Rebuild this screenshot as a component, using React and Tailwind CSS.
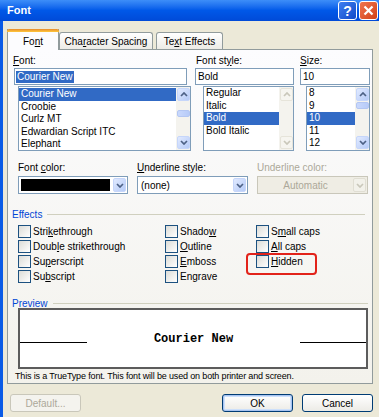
import React from 'react';

const sans = "font-['Liberation_Sans',Arial,sans-serif]";

function Chevron({ dir = 'down', color = '#4d6185' }) {
  return (
    <svg width="8" height="5" viewBox="0 0 8 5">
      <path d={dir === 'down' ? 'M1 1 L4 4 L7 1' : 'M1 4 L4 1 L7 4'} fill="none" stroke={color} strokeWidth="1.7" />
    </svg>
  );
}

function ScrollBtn({ dir, disabled }) {
  return (
    <div
      className={`w-[13px] h-[13px] rounded-[2px] border flex items-center justify-center ${
        disabled ? 'border-[#e6e4da] bg-[#f6f5f0]' : 'border-[#c6d6fa] bg-gradient-to-br from-[#e1eaff] to-[#b6cbf7]'
      }`}
    >
      <Chevron dir={dir} color={disabled ? '#c9c7ba' : '#4d6185'} />
    </div>
  );
}

function ScrollBar({ disabled, thumbTop }) {
  return (
    <div className="w-[14px] flex flex-col justify-between bg-[#f4f3ee] pl-[1px] py-[1px]">
      <div className="flex flex-col">
        <ScrollBtn dir="up" disabled={disabled} />
        {!disabled && (
          <div
            className="w-[13px] h-[7px] rounded-[2px] border border-[#b3c6f2] bg-gradient-to-r from-[#c9d8fc] to-[#b7cbf8]"
            style={{ marginTop: thumbTop }}
          />
        )}
      </div>
      <ScrollBtn dir="down" disabled={disabled} />
    </div>
  );
}

function ListBox({ items, selected, width, disabledBar, thumbTop, pad = 0 }) {
  return (
    <div className="flex border border-[#7f9db9] bg-white h-[65px] overflow-hidden" style={{ width }}>
      <div className="flex-1 flex flex-col" style={{ paddingTop: pad }}>
        {items.map((it) => (
          <div
            key={it}
            className={`h-[12.6px] leading-[12.6px] pl-[2px] text-[10px] whitespace-nowrap ${
              it === selected ? 'bg-[#316ac5] text-white' : 'text-black'
            }`}
          >
            {it}
          </div>
        ))}
      </div>
      <ScrollBar disabled={disabledBar} thumbTop={thumbTop} />
    </div>
  );
}

function Label({ children, gray }) {
  return <div className={`h-[12px] leading-[12px] text-[10px] ${gray ? 'text-[#aca899]' : 'text-black'}`}>{children}</div>;
}

function DropBtn({ disabled }) {
  return (
    <div
      className={`w-[13px] h-[14px] rounded-[2px] border flex items-center justify-center ${
        disabled ? 'border-[#e0ded3] bg-[#f2f1ea]' : 'border-[#c6d6fa] bg-gradient-to-br from-[#e1eaff] to-[#b6cbf7]'
      }`}
    >
      <Chevron color={disabled ? '#c9c7ba' : '#4d6185'} />
    </div>
  );
}

function Check({ label }) {
  return (
    <div className="h-[15px] flex items-center">
      <div className="w-[13px] h-[13px] border border-[#1c5180] bg-gradient-to-br from-[#dcdcd7] to-white" />
      <div className="ml-[2px] text-[10px] leading-[12px] text-black whitespace-nowrap">{label}</div>
    </div>
  );
}

function Btn({ children, kind }) {
  const cls =
    kind === 'disabled'
      ? 'border-[#c9c7ba] text-[#aca899] bg-[#f4f3ee]'
      : kind === 'default'
      ? 'border-[#003c74] text-black bg-gradient-to-b from-white to-[#ecebe6] shadow-[inset_0_0_0_1px_#a8c4f0,inset_0_0_0_2px_#cde0fb]'
      : 'border-[#003c74] text-black bg-gradient-to-b from-white to-[#ecebe6]';
  return (
    <div className={`w-[71px] h-[18px] rounded-[3px] border flex items-center justify-center text-[10px] ${cls}`}>
      {children}
    </div>
  );
}

export default function App() {
  return (
    <div className={`w-[379px] h-[417px] overflow-hidden flex flex-col bg-[#ece9d8] ${sans}`}>
      {/* title bar */}
      <div className="h-[21px] shrink-0 flex items-center bg-gradient-to-b from-[#3d8ef8] via-[#0058e8] to-[#004ad8]">
        <div className="ml-[7px] text-[11px] font-bold text-white flex-1">Font</div>
        <div className="w-[19px] h-[19px] rounded-[3px] border border-white bg-gradient-to-br from-[#3f7ff0] to-[#1149c9] flex items-center justify-center text-white font-bold text-[14px] leading-none">
          ?
        </div>
        <div className="ml-[2px] mr-[1px] w-[19px] h-[19px] rounded-[3px] border border-white bg-gradient-to-br from-[#f0754f] to-[#d23f12] flex items-center justify-center">
          <svg width="11" height="11" viewBox="0 0 11 11">
            <path d="M1.5 1.5 L9.5 9.5 M9.5 1.5 L1.5 9.5" stroke="white" strokeWidth="2.2" />
          </svg>
        </div>
      </div>

      <div className="flex-1 flex flex-col border-l-[3px] border-[#0a5be6]">
        {/* tabs */}
        <div className="mt-[8px] ml-[4px] flex items-end h-[20px]">
          <div className="relative z-10 -mb-px w-[52px] h-[21px] border-x border-[#919b9c] bg-[#fcfcfe] flex flex-col">
            <div className="h-[3px] rounded-t-[2px] bg-gradient-to-b from-[#e68b2c] to-[#ffc83c] -mx-px" />
            <div className="flex-1 flex items-center justify-center text-[10px]">
              Fo<u>n</u>t
            </div>
          </div>
          <div className="w-[94px] h-[17px] border border-b-0 border-[#919b9c] rounded-t-[3px] bg-gradient-to-b from-white to-[#ecebe6] flex items-center justify-center text-[10px]">
            Cha<u>r</u>acter Spacing
          </div>
          <div className="ml-[3px] w-[67px] h-[17px] border border-b-0 border-[#919b9c] rounded-t-[3px] bg-gradient-to-b from-white to-[#ecebe6] flex items-center justify-center text-[10px]">
            Te<u>x</u>t Effects
          </div>
        </div>

        {/* panel */}
        <div className="ml-[4px] w-[366px] h-[335px] border border-[#919b9c] bg-gradient-to-b from-[#fcfcfe] to-[#f3f2ec] flex flex-col">
          {/* row 1 */}
          <div className="mt-[5px] ml-[6px] flex">
            <div className="w-[177px] flex flex-col">
              <div className="-ml-px">
                <Label>
                  <u>F</u>ont:
                </Label>
              </div>
              <div className="mt-[1px] w-[173px] h-[17px] border border-[#7f9db9] bg-white flex items-center pl-[1px]">
                <span className="bg-[#316ac5] text-white text-[10px] leading-[12px] px-[1px]">Courier New</span>
              </div>
              <div className="mt-[1px] ml-[4px]">
                <ListBox
                  width={173}
                  pad={1}
                  thumbTop={9}
                  items={['Courier New', 'Croobie', 'Curlz MT', 'Edwardian Script ITC', 'Elephant']}
                  selected="Courier New"
                />
              </div>
            </div>
            <div className="ml-[4px] w-[99px] flex flex-col">
              <div className="ml-[1px]">
                <Label>
                  Font st<u>y</u>le:
                </Label>
              </div>
              <div className="mt-[1px] w-[99px] h-[17px] border border-[#7f9db9] bg-white flex items-center pl-[2px] text-[10px]">
                Bold
              </div>
              <div className="mt-[1px] ml-[8px]">
                <ListBox width={91} disabledBar items={['Regular', 'Italic', 'Bold', 'Bold Italic']} selected="Bold" />
              </div>
            </div>
            <div className="ml-[6px] w-[70px] flex flex-col">
              <Label>
                <u>S</u>ize:
              </Label>
              <div className="mt-[1px] w-[70px] h-[17px] border border-[#7f9db9] bg-white flex items-center pl-[2px] text-[10px]">
                10
              </div>
              <div className="mt-[1px] ml-[6px]">
                <ListBox width={64} thumbTop={1} items={['8', '9', '10', '11', '12']} selected="10" />
              </div>
            </div>
          </div>

          {/* row 2 */}
          <div className="mt-[11px] ml-[10px] flex gap-[9px]">
            <div className="w-[110px] flex flex-col">
              <Label>
                Font <u>c</u>olor:
              </Label>
              <div className="mt-[2px] h-[18px] border border-[#7f9db9] bg-white flex items-center pl-[2px] pr-[1px]">
                <div className="flex-1 h-[12px] bg-black mr-[3px]" />
                <DropBtn />
              </div>
            </div>
            <div className="w-[111px] flex flex-col">
              <Label>
                <u>U</u>nderline style:
              </Label>
              <div className="mt-[2px] h-[18px] border border-[#7f9db9] bg-white flex items-center pl-[3px] pr-[1px]">
                <div className="flex-1 text-[10px]">(none)</div>
                <DropBtn />
              </div>
            </div>
            <div className="w-[111px] flex flex-col">
              <Label gray>Underline color:</Label>
              <div className="mt-[2px] h-[18px] border border-[#c9c7ba] bg-[#efede4] flex items-center pr-[1px]">
                <div className="flex-1 text-center text-[10px] text-[#aca899]">Automatic</div>
                <DropBtn disabled />
              </div>
            </div>
          </div>

          {/* effects */}
          <div className="mt-[14px] ml-[4px] flex items-center h-[12px]">
            <div className="text-[10px] text-[#0046d5]">Effects</div>
            <div className="ml-[5px] w-[318px] h-px bg-[#d0d0bf]" />
          </div>
          <div className="mt-[4px] ml-[10px] flex">
            <div className="w-[147px] flex flex-col">
              <Check label={<>Stri<u>k</u>ethrough</>} />
              <Check label={<>Doub<u>l</u>e strikethrough</>} />
              <Check label={<>Su<u>p</u>erscript</>} />
              <Check label={<>Su<u>b</u>script</>} />
            </div>
            <div className="w-[91px] flex flex-col">
              <Check label={<>Shado<u>w</u></>} />
              <Check label={<><u>O</u>utline</>} />
              <Check label={<><u>E</u>mboss</>} />
              <Check label={<>En<u>g</u>rave</>} />
            </div>
            <div className="relative flex flex-col">
              <Check label={<>S<u>m</u>all caps</>} />
              <Check label={<><u>A</u>ll caps</>} />
              <Check label={<><u>H</u>idden</>} />
              <div className="absolute left-[-10px] top-[29px] w-[71px] h-[22px] rounded-[4px] border-2 border-[#e2231a]" />
            </div>
          </div>

          {/* preview */}
          <div className="mt-[13px] ml-[4px] flex items-center h-[12px]">
            <div className="text-[10px] text-[#0046d5]">Preview</div>
            <div className="ml-[5px] w-[315px] h-px bg-[#d0d0bf]" />
          </div>
          <div className="-mt-px ml-[10px] w-[350px] h-[61px] border-2 border-[#5c5c5c] bg-white flex items-center">
            <div className="w-[67px] h-px bg-black mt-[8px]" />
            <div className="flex-1 text-center font-['Liberation_Mono',monospace] font-bold text-[12px]">Courier New</div>
            <div className="w-[66px] h-px bg-black mt-[8px]" />
          </div>
          <div className="mt-[1px] ml-[7px] text-[9px] tracking-[-0.15px] leading-[12px] text-black whitespace-nowrap">
            This is a TrueType font. This font will be used on both printer and screen.
          </div>
        </div>

        {/* buttons */}
        <div className="mt-[10px] flex">
          <div className="ml-[7px]">
            <Btn kind="disabled">Default...</Btn>
          </div>
          <div className="ml-[141px]">
            <Btn kind="default">OK</Btn>
          </div>
          <div className="ml-[9px]">
            <Btn>Cancel</Btn>
          </div>
        </div>
      </div>
    </div>
  );
}
